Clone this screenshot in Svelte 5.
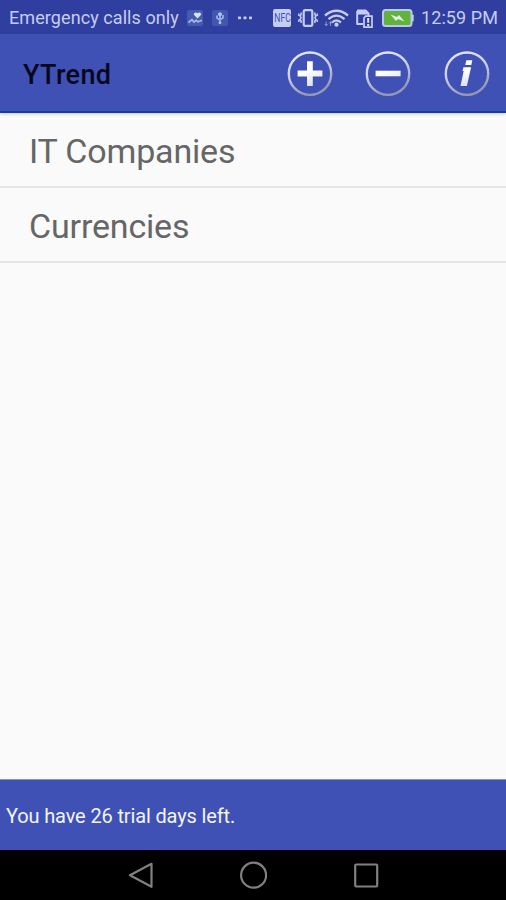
<script lang="ts">
  type Action = { id: string; label: string };

  const actions: Action[] = [
    { id: "add", label: "Add" },
    { id: "remove", label: "Remove" },
    { id: "info", label: "Info" },
  ];

  let groups = $state(["IT Companies", "Currencies"]);
  let trialDays = $state(26);
</script>

<div class="screen">
  <header class="status-bar">
    <span class="carrier">Emergency calls only</span>
    <svg class="health" width="16" height="16" viewBox="0 0 16 16">
      <rect width="16" height="16" rx="2.5" fill="#455bb2" />
      <path d="M10.5 8.5 7.3 5.3C5.8 3.6 8.5 1.2 10.5 3.2c2-2 4.7.4 3.2 2.1z" fill="#dce3ff" />
      <path d="M1.5 12.5 5 9.7l2 2.3 2.2-1.7 1.8 1.5 4-1.5" fill="none" stroke="#a9b8e4" stroke-width="1.7" />
    </svg>
    <svg class="usb" width="16" height="16" viewBox="0 0 16 16">
      <rect width="16" height="16" rx="2.5" fill="#4056b0" />
      <path d="M8 3v10M5 5.500v2.500l3 2M11 5v3L8 9.500" fill="none" stroke="#9eb0e2" stroke-width="1.7" />
      <circle cx="8" cy="4.200" r="2" fill="#b1c2ec" />
      <circle cx="8" cy="12.800" r="1.400" fill="#b1c2ec" />
    </svg>
    <svg class="more" width="14" height="4" viewBox="0 0 14 4" fill="#c5cdf5">
      <rect y=".6" width="3" height="2.6" rx=".6" />
      <rect x="5.5" y=".6" width="3" height="2.6" rx=".6" />
      <rect x="11" y=".6" width="3" height="2.6" rx=".6" />
    </svg>

    <div class="indicators">
      <span class="nfc"><span>NFC</span></span>
      <svg class="vibrate" width="20" height="18" viewBox="0 0 20 18" fill="none" stroke="#c5cdf5">
        <rect x="5.700" y="1.200" width="8.600" height="15.600" rx="1.500" stroke-width="2.200" />
        <path d="M3.100 3.500v2l-1 1.500 1 1.700-1 1.800 1 1.500v2M.8 4.500v2.500M.8 10.500v2.500M16.900 3.500v2l1 1.500-1 1.700 1 1.800-1 1.500v2M19.200 4.500v2.500M19.200 10.500v2.500" stroke-width="1.500" />
      </svg>
      <svg class="wifi" width="25" height="18" viewBox="0 0 25 18" fill="none" stroke="#c5cdf5">
        <path d="M1 6.500Q12.500-3 24 6.500M4.500 10.200Q12.500 3 20.500 10.200M8 13.500Q12.500 9.200 17 13.500" stroke-width="2.300" />
        <circle cx="12.500" cy="15.700" r="2.100" fill="#c5cdf5" stroke="none" />
        <path d="M2.200 12.500v4M.8 15l1.400 1.800L3.600 15M6.500 17v-4M5.100 14.500l1.400-1.800 1.400 1.800" stroke-width="1" opacity=".6" />
      </svg>
      <svg class="sim" width="17" height="19" viewBox="0 0 17 19">
        <path d="M1.200 2v13H7M1.200 1.500h8.300L12.500 4.500V8" fill="none" stroke="#c5cdf5" stroke-width="2" stroke-linejoin="round" />
        <path d="M1 1h8.500L12 3.500v2H1z" fill="#c5cdf5" />
        <path d="M8 9 9.500 7.200H16v11H8z" fill="#2f3d9f" stroke="#c5cdf5" stroke-width="1.700" />
        <path d="M12.200 9v4.800M12.200 15v2" stroke="#e0e4ff" stroke-width="2" />
      </svg>
      <svg class="battery" width="32" height="18" viewBox="0 0 32 18">
        <path d="M29.500 5.500h1.200a1 1 0 0 1 1 1v5a1 1 0 0 1-1 1h-1.200z" fill="#c5cdf5" />
        <rect x="1" y="1" width="28.500" height="16" rx="2.500" fill="#62b33c" stroke="#bcc8e8" stroke-width="2" />
        <path d="m8.500 5.500 6.500 2.500 2-2 5.500 6.500-6.500-2.500-2 2z" fill="#e4eee9" />
      </svg>
      <time>12:59 PM</time>
    </div>
  </header>

  <div class="toolbar">
    <h1>YTrend</h1>
    <div class="actions">
      {#each actions as action (action.id)}
        <button aria-label={action.label}>
          <svg width="46" height="46" viewBox="0 0 46 46">
            <defs>
              <linearGradient id="ring-{action.id}" x1="0" y1="0" x2=".35" y2="1">
                <stop offset="0" stop-color="#e8eaff" />
                <stop offset=".5" stop-color="#cdd0ef" />
                <stop offset="1" stop-color="#9698b5" />
              </linearGradient>
              <linearGradient id="glyph-{action.id}" gradientUnits="userSpaceOnUse" x1="18" y1="9" x2="27" y2="36">
                <stop offset=".4" stop-color="#fff" />
                <stop offset="1" stop-color="#d8daea" />
              </linearGradient>
            </defs>
            <circle cx="23" cy="22.700" r="21.200" fill="none" stroke="url(#ring-{action.id})" stroke-width="2.400" />
            <g fill="url(#glyph-{action.id})">
              {#if action.id === "add"}
                <path d="M20 10.300h5.800v9.300h9.600v5.800h-9.600v9.600H20v-9.600h-9.400v-5.800H20z" />
              {:else if action.id === "remove"}
                <path d="M10.600 19.700h25v5.600h-25z" />
              {:else}
                <path d="M22.300 9.200h6l-1 4.700h-6zM19.500 16.200h7.600l-4.200 18.900H16.500l3.200-15h-1.200z" />
              {/if}
            </g>
          </svg>
        </button>
      {/each}
    </div>
  </div>

  <ul class="groups">
    {#each groups as group}
      <li>{group}</li>
    {/each}
  </ul>

  <footer class="trial">You have {trialDays} trial days left.</footer>

  <nav class="nav-bar">
    <svg width="26" height="28" viewBox="0 0 26 28"><path d="M24.500 2.800v23L3 14.300z" /></svg>
    <svg width="28" height="28" viewBox="0 0 28 28"><circle cx="14.600" cy="14.200" r="12.500" /></svg>
    <svg width="26" height="28" viewBox="0 0 26 28"><rect x="2.200" y="3.500" width="22" height="22" rx="1" /></svg>
  </nav>
</div>

<style>
  :global(body) {
    margin: 0;
  }

  .screen {
    display: flex;
    flex-direction: column;
    height: 900px;
    overflow: hidden;
    background: #fafafa;
    font-family: Roboto, "Liberation Sans", sans-serif;
  }

  .status-bar {
    display: flex;
    align-items: center;
    flex: none;
    box-sizing: border-box;
    height: 34px;
    padding: 2px 8px 0 9px;
    background: #303f9f;
    color: #c5cdf5;
    font-size: 18px;
    line-height: 32px;
    white-space: nowrap;
  }

  .status-bar svg {
    flex: none;
  }

  .carrier {
    width: 170px;
    letter-spacing: 0.08px;
  }

  .health {
    margin-left: 8px;
  }

  .usb {
    margin-left: 9px;
  }

  .more {
    margin-left: 10px;
  }

  .indicators {
    display: flex;
    align-items: center;
    margin-left: auto;
  }

  .nfc {
    display: flex;
    align-items: center;
    justify-content: center;
    width: 18px;
    height: 18px;
    border-radius: 2px;
    background: #c5cdf5;
    color: #4552a8;
    font-size: 12px;
    line-height: 18px;
  }

  .nfc span {
    transform: scale(0.72, 1.1);
  }

  .vibrate {
    margin-left: 7px;
  }

  .wifi {
    margin-left: 6px;
  }

  .sim {
    margin-left: 7px;
  }

  .battery {
    margin-left: 9px;
  }

  time {
    width: 77px;
    margin-left: 7px;
    letter-spacing: 0.08px;
  }

  .toolbar {
    display: flex;
    align-items: center;
    justify-content: space-between;
    flex: none;
    box-sizing: border-box;
    height: 79px;
    padding: 2px 16px 0 23px;
    border-bottom: 2px solid #173a9f;
    background: #3f51b5;
    box-shadow: 0 1px 3px rgba(0, 0, 0, 0.22);
  }

  h1 {
    margin: 2px 0 0;
    color: #05081c;
    font-size: 27px;
    font-weight: 500;
    letter-spacing: 0.35px;
  }

  .actions {
    display: flex;
    gap: 32.6px;
  }

  button {
    display: block;
    width: 46px;
    height: 46px;
    padding: 0;
    border: 0;
    background: none;
  }

  .groups {
    flex: 1;
    margin: 0;
    padding: 0;
    list-style: none;
  }

  li {
    box-sizing: border-box;
    height: 75px;
    padding: 2px 29px 0;
    border-bottom: 2px solid #e6e6e6;
    color: #666;
    font-size: 34px;
    letter-spacing: -0.17px;
    line-height: 73px;
  }

  .trial {
    flex: none;
    box-sizing: border-box;
    height: 71px;
    padding-left: 6px;
    border-top: 1px solid #8791cc;
    background: #3f51b5;
    color: #f2f4ff;
    font-size: 20px;
    letter-spacing: -0.14px;
    line-height: 72px;
  }

  .nav-bar {
    display: flex;
    align-items: center;
    justify-content: center;
    gap: 86px;
    flex: none;
    height: 50px;
    background: #000;
  }

  .nav-bar svg {
    fill: none;
    stroke: #808080;
    stroke-width: 2.2;
    stroke-linejoin: round;
  }
</style>
